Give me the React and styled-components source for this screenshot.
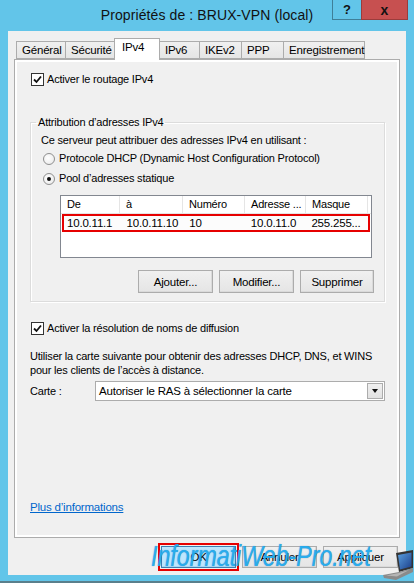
import React from 'react';
import styled, { createGlobalStyle } from 'styled-components';

const GlobalStyle = createGlobalStyle`
	html, body {
		margin: 0;
		padding: 0;
		background: #ffffff;
	}
	body {
		font-family: "Liberation Sans", Arial, sans-serif;
		font-size: 11px;
		letter-spacing: -0.2px;
		color: #000;
	}
`;

const Window = styled.div`
	position: relative;
	width: 414px;
	height: 583px;
	box-sizing: border-box;
	background: #62c5e9;
	border-bottom: 2px solid #5a7f8c;
	display: flex;
	flex-direction: column;
	overflow: hidden;
`;

const TitleBar = styled.div`
	height: 31px;
	flex: none;
	display: grid;
	grid-template-columns: 1fr auto 1fr;
`;

const Title = styled.div`
	grid-column: 2;
	font-size: 14px;
	letter-spacing: 0.1px;
	line-height: 31px;
	color: #111;
	white-space: nowrap;
`;

const Captions = styled.div`
	grid-column: 3;
	display: flex;
	justify-content: flex-end;
	align-items: flex-start;
	padding-right: 6px;
`;

const CaptionButton = styled.div`
	width: ${(p) => p.$w}px;
	height: 20px;
	box-sizing: border-box;
	border: 1px solid ${(p) => (p.$close ? '#9b3c3c' : '#3f7f98')};
	border-top: none;
	margin-left: -1px;
	background: ${(p) => (p.$close ? '#c75050' : '#62c5e9')};
	display: flex;
	align-items: center;
	justify-content: center;
	font-weight: bold;
	font-size: ${(p) => (p.$close ? '14px' : '13px')};
	letter-spacing: 0;
	color: #111;
`;

const Client = styled.div`
	flex: 1;
	margin: 0 8px 6px 8px;
	background: #f0f0f0;
	padding-top: 7px;
	display: flex;
	flex-direction: column;
`;

const TabStrip = styled.div`
	display: flex;
	align-items: flex-end;
	height: 21px;
	padding-left: 8px;
	position: relative;
	z-index: 1;
`;

const Tab = styled.div`
	width: ${(p) => p.$w}px;
	height: ${(p) => (p.$active ? 22 : 18)}px;
	margin-bottom: ${(p) => (p.$active ? -1 : 0)}px;
	margin-right: -1px;
	box-sizing: border-box;
	border: 1px solid #acacac;
	border-bottom: ${(p) => (p.$active ? 'none' : '1px solid #acacac')};
	background: ${(p) =>
		p.$active ? '#ffffff' : 'linear-gradient(#f0f0f0, #e5e5e5)'};
	padding: ${(p) => (p.$active ? '2px 0 0 7px' : '2px 0 0 5px')};
	line-height: 13px;
	font-size: 11.5px;
	white-space: nowrap;
	position: relative;
	z-index: ${(p) => (p.$active ? 2 : 0)};
`;

const Panel = styled.div`
	margin: 0 6px;
	height: 479px;
	box-sizing: border-box;
	border: 1px solid #acacac;
	background: #fff;
	padding: 2px;
	display: flex;
`;

const PanelBody = styled.div`
	flex: 1;
	background: #f0f0f0;
	padding: 11px 12px 21px 13px;
	display: flex;
	flex-direction: column;
`;

const CheckRow = styled.label`
	display: flex;
	align-items: center;
	gap: 3px;
	height: 13px;
	line-height: 13px;
	margin-left: 1px;
	margin-top: ${(p) => p.$top || 0}px;
`;

const CheckBox = styled.span`
	width: 13px;
	height: 13px;
	box-sizing: border-box;
	border: 1px solid #333;
	background: #fff;
	display: inline-flex;
	align-items: center;
	justify-content: center;
	flex: none;
`;

const Group = styled.fieldset`
	margin: 30px 0 0 0;
	padding: 0 10px 8px 10px;
	border: 1px solid #dcdcdc;
	box-shadow: inset 1px 1px 0 #fff, 1px 1px 0 #fff;
	min-width: 0;
	display: flex;
	flex-direction: column;
`;

const Legend = styled.legend`
	padding: 0 2px;
	margin-left: -5px;
	line-height: 13px;
`;

const Text = styled.div`
	line-height: ${(p) => p.$lh || 13}px;
	margin-top: ${(p) => p.$top || 0}px;
`;

const RadioRow = styled.div`
	display: flex;
	align-items: center;
	gap: 4px;
	height: 13px;
	line-height: 13px;
	margin: ${(p) => p.$top}px 0 0 2px;
`;

const RadioCircle = styled.span`
	width: 12px;
	height: 12px;
	box-sizing: border-box;
	border-radius: 50%;
	border: 1px solid #8f8f8f;
	background: radial-gradient(circle at 40% 40%, #fff, #e6e6e6);
	display: inline-flex;
	align-items: center;
	justify-content: center;
	flex: none;

	&::after {
		content: '';
		width: 4px;
		height: 4px;
		border-radius: 50%;
		background: ${(p) => (p.$on ? '#111' : 'transparent')};
	}
`;

const ListView = styled.div`
	margin: 10px 0 0 19px;
	height: 63px;
	width: 312px;
	box-sizing: border-box;
	border: 1px solid #828790;
	background: #fff;
`;

const HeaderRow = styled.div`
	display: flex;
	height: 17px;
	border-bottom: 1px solid #e5e5e5;
`;

const HeaderCell = styled.div`
	width: ${(p) => p.$w}px;
	box-sizing: border-box;
	border-right: 1px solid #e5e5e5;
	padding-left: 6px;
	line-height: 16px;
	white-space: nowrap;
	overflow: hidden;
`;

const DataRow = styled.div`
	display: flex;
	height: 18px;
	margin: 0 1px;
	box-sizing: border-box;
	border: 2px solid #e60000;
	background: #fcfcfc;
`;

const DataCell = styled.div`
	width: ${(p) => p.$w}px;
	box-sizing: border-box;
	padding-left: ${(p) => p.$pl || 5}px;
	line-height: 14px;
	font-size: 11.5px;
	white-space: nowrap;
	overflow: hidden;
`;

const ButtonRow = styled.div`
	display: flex;
	justify-content: flex-end;
	gap: ${(p) => p.$gap || 6}px;
	margin-top: ${(p) => p.$top || 0}px;
`;

const Button = styled.div`
	width: ${(p) => p.$w || 75}px;
	height: ${(p) => p.$h || 23}px;
	box-sizing: border-box;
	border: 1px solid ${(p) => (p.$default ? '#3c7fb1' : '#acacac')};
	background: ${(p) =>
		p.$default ? '#bee6fd' : 'linear-gradient(#f0f0f0, #e5e5e5)'};
	box-shadow: inset -1px -1px 0 ${(p) => (p.$default ? '#a7d6f3' : '#dadada')};
	outline: ${(p) => (p.$marked ? '2px solid #e60000' : 'none')};
	outline-offset: 1px;
	display: flex;
	align-items: center;
	justify-content: center;
	font-size: 11.5px;
`;

const CardRow = styled.div`
	display: flex;
	align-items: center;
	margin-top: 4px;
	height: 20px;
`;

const CardLabel = styled.div`
	width: 65px;
`;

const Combo = styled.div`
	flex: 1;
	height: 20px;
	box-sizing: border-box;
	border: 1px solid #acacac;
	background: #fff;
	display: flex;
	align-items: center;
	padding-left: 3px;
`;

const ComboText = styled.div`
	flex: 1;
	font-size: 11.5px;
`;

const ComboArrow = styled.div`
	width: 16px;
	height: 16px;
	margin-right: 1px;
	box-sizing: border-box;
	border: 1px solid #acacac;
	background: linear-gradient(#f0f0f0, #e1e1e1);
	display: flex;
	align-items: center;
	justify-content: center;

	&::after {
		content: '';
		border-left: 3px solid transparent;
		border-right: 3px solid transparent;
		border-top: 4px solid #111;
	}
`;

const Link = styled.a`
	margin-top: auto;
	align-self: flex-start;
	color: #0066cc;
	text-decoration: underline;
	line-height: 14px;
	font-size: 11.5px;
`;

const Footer = styled(ButtonRow)`
	padding: 8px 8px 0 0;
`;

const Watermark = styled.div`
	position: absolute;
	left: 151px;
	top: 540px;
	font-size: 29px;
	font-style: italic;
	letter-spacing: 0;
	white-space: nowrap;
	color: rgba(38, 176, 242, 0.92);
	text-shadow: 0 0 1px rgba(0, 90, 160, 0.7);
	transform: scaleX(0.8);
	transform-origin: left top;
	pointer-events: none;
`;

const Laptop = styled.svg`
	position: absolute;
	right: 0;
	bottom: 0;
`;

const CheckMark = () => (
	<svg width="9" height="9" viewBox="0 0 9 9">
		<path d="M1 4.5 L3.5 7 L8 1.5" fill="none" stroke="#111" strokeWidth="1.8" />
	</svg>
);

const cols = [59, 63, 62, 61, 62];

const App = () => (
	<>
		<GlobalStyle />
		<Window>
			<TitleBar>
				<Title>Propriétés de : BRUX-VPN (local)</Title>
				<Captions>
					<CaptionButton $w={30}>?</CaptionButton>
					<CaptionButton $w={47} $close>x</CaptionButton>
				</Captions>
			</TitleBar>
			<Client>
				<TabStrip>
					<Tab $w={50}>Général</Tab>
					<Tab $w={50}>Sécurité</Tab>
					<Tab $w={46} $active>IPv4</Tab>
					<Tab $w={41}>IPv6</Tab>
					<Tab $w={43}>IKEv2</Tab>
					<Tab $w={43}>PPP</Tab>
					<Tab $w={82}>Enregistrement</Tab>
				</TabStrip>
				<Panel>
					<PanelBody>
						<CheckRow>
							<CheckBox><CheckMark /></CheckBox>
							Activer le routage IPv4
						</CheckRow>

						<Group>
							<Legend>Attribution d’adresses IPv4</Legend>
							<Text $top={5}>Ce serveur peut attribuer des adresses IPv4 en utilisant :</Text>
							<RadioRow $top={5}>
								<RadioCircle />
								Protocole DHCP (Dynamic Host Configuration Protocol)
							</RadioRow>
							<RadioRow $top={7}>
								<RadioCircle $on />
								Pool d’adresses statique
							</RadioRow>
							<ListView>
								<HeaderRow>
									{['De', 'à', 'Numéro', 'Adresse ...', 'Masque'].map((h, i) => (
										<HeaderCell key={h} $w={cols[i]}>{h}</HeaderCell>
									))}
								</HeaderRow>
								<DataRow>
									{['10.0.11.1', '10.0.11.10', '10', '10.0.11.0', '255.255...'].map((v, i) => (
										<DataCell key={v} $w={i === 0 ? cols[i] - 1 : cols[i]} $pl={i === 0 ? 3 : 5}>{v}</DataCell>
									))}
								</DataRow>
							</ListView>
							<ButtonRow $top={12}>
								<Button>Ajouter...</Button>
								<Button>Modifier...</Button>
								<Button $w={74}>Supprimer</Button>
							</ButtonRow>
						</Group>

						<CheckRow $top={20}>
							<CheckBox><CheckMark /></CheckBox>
							Activer la résolution de noms de diffusion
						</CheckRow>

						<Text $lh={14} $top={14}>
							Utiliser la carte suivante pour obtenir des adresses DHCP, DNS, et WINS
							<br />
							pour les clients de l’accès à distance.
						</Text>

						<CardRow>
							<CardLabel>Carte :</CardLabel>
							<Combo>
								<ComboText>Autoriser le RAS à sélectionner la carte</ComboText>
								<ComboArrow />
							</Combo>
						</CardRow>

						<Link href="#">Plus d’informations</Link>
					</PanelBody>
				</Panel>
				<Footer $gap={6}>
					<Button $default $marked $h={22}>OK</Button>
					<Button $h={22}>Annuler</Button>
					<Button $h={22}>Appliquer</Button>
				</Footer>
			</Client>
			<Watermark>InformatiWeb-Pro.net</Watermark>
			<Laptop width="32" height="31" viewBox="0 0 32 31">
				<defs>
					<linearGradient id="scr" x1="0" y1="0" x2="1" y2="1">
						<stop offset="0" stopColor="#5aa0e0" />
						<stop offset="1" stopColor="#1c3f8a" />
					</linearGradient>
				</defs>
				<polygon points="14,3 31,0 31,18 17,22" fill="#333" />
				<polygon points="16,5 29.5,2.5 29.5,16.5 18,19.5" fill="url(#scr)" />
				<polygon points="1,25 17,22 31,18 31,22 14,30 2,28" fill="#8a8a8a" />
				<polygon points="4,25.5 17,23 27,20 15,26.5" fill="#b5b5b5" />
			</Laptop>
		</Window>
	</>
);

export default App;
